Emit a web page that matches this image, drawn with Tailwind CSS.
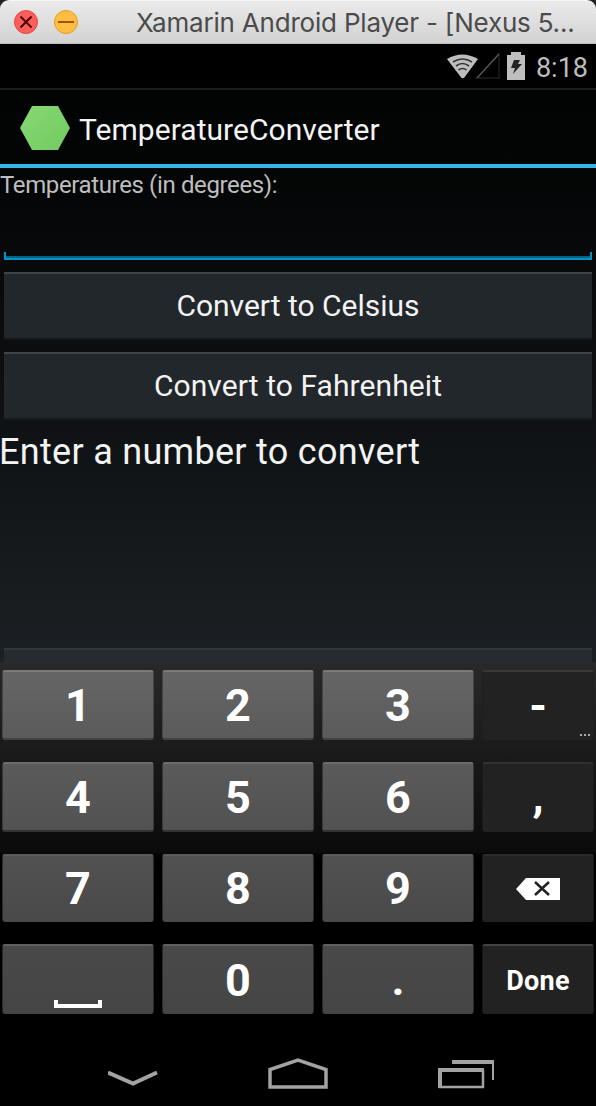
<!DOCTYPE html>
<html lang="en">
<head>
<meta charset="utf-8">
<title>Xamarin Android Player</title>
<script src="https://cdn.jsdelivr.net/npm/@tailwindcss/browser@4"></script>
</head>
<body class="bg-[#222]">
<div class="flex h-[1106px] w-[596px] flex-col overflow-hidden font-['Roboto',sans-serif] whitespace-nowrap">
  <!-- Window title bar -->
  <header class="flex h-[44px] shrink-0 items-center rounded-t-[9px] border-t border-b border-t-[#f6f6f6] border-b-[#bdbdbd] bg-linear-to-b from-[#ebebeb] to-[#d2d2d2] pl-[14px]">
    <svg class="size-6 shrink-0" viewBox="0 0 24 24"><circle cx="12" cy="12" r="11.5" fill="#ff5f5c" stroke="#e2453f"/><path d="M6.5 6.500 17.500 17.500M17.500 6.500 6.500 17.500" stroke="#4d0000" stroke-width="2"/></svg>
    <svg class="ml-4 size-6 shrink-0" viewBox="0 0 24 24"><circle cx="12" cy="12" r="11.500" fill="#ffbe41" stroke="#dfa023"/><path d="M4 12H20" stroke="#995700" stroke-width="2"/></svg>
    <span class="ml-[58px] pt-[2px] font-['Inter'] text-[26px] leading-[42px] tracking-[-0.2px] text-[#4b4b4b]">Xamarin Android Player - [Nexus 5...</span>
  </header>
  <!-- Status bar -->
  <div class="flex h-[46px] shrink-0 items-start justify-end border-b-2 border-[#1c1c1c] bg-black pr-[8px]">
    <svg class="mt-[8px] h-[28px] w-[80px] shrink-0" viewBox="0 0 80 28">
      <path d="M1 7Q16-2 32 7L18 26H15.500Z" fill="#bebebe"/>
      <path d="M7 10Q16.500 4 26 10M10 14Q16.500 9 23 14M12.500 18Q16.500 15 20.500 18" fill="none" stroke="#333" stroke-width="1.600"/>
      <path d="M31 26 53 2V26Z" fill="none" stroke="#1d1d1d" stroke-width="1.500"/><path d="M31 26 53 2" stroke="#555" stroke-width="1.300"/>
      <path d="M61 3H65V0H75V3H79V28H61Z" fill="#bebebe"/><path d="M68 8H74L72 12H76L67 22 69 16H65Z" fill="#222"/>
    </svg>
    <span class="ml-[10px] text-[27px] leading-[49px] text-[#bebebe]">8:18</span>
  </div>
  <!-- App -->
  <main class="flex h-[572px] shrink-0 flex-col overflow-hidden bg-linear-to-b from-[#020303] via-[#0d0f11] to-[#1b2024]">
    <div class="flex h-[78px] shrink-0 items-center border-b-4 border-[#33b5e5] pt-[2px] pl-[20px]">
      <svg class="h-[44px] w-[50px]" viewBox="0 0 50 44"><defs><linearGradient id="g" x2="1" y2="1"><stop stop-color="#88d874"/><stop offset="1" stop-color="#72cb60"/></linearGradient></defs><path d="M12 0H38L50 22 38 44H12L0 22Z" fill="url(#g)"/></svg>
      <span class="ml-[9px] pt-[3px] text-[30px] leading-[40px] tracking-[0.05px] text-[#f3f3f3]">TemperatureConverter</span>
    </div>
    <div class="h-[34px] shrink-0 text-[24px] leading-[34px] tracking-[-0.37px] text-[#bebebe]">Temperatures (in degrees):</div>
    <div class="mx-1 flex h-[58px] shrink-0 flex-col justify-end">
      <div class="h-[8px] border-x-2 border-b-2 border-[#0093c4]"><div class="mt-[4px] h-[2px] bg-[#006384]"></div></div>
    </div>
    <button class="mx-1 mt-[12px] h-[68px] shrink-0 border-t-2 border-b-2 border-t-[#3f4448] border-b-[#15181a] bg-[#22272b] text-[30px] leading-[64px] text-[#f3f3f3]">Convert to Celsius</button>
    <button class="mx-1 mt-[12px] h-[68px] shrink-0 border-t-2 border-b-2 border-t-[#3f4448] border-b-[#151a1a] bg-[#22272b] text-[30px] leading-[64px] tracking-[0.08px] text-[#f3f3f3]">Convert to Fahrenheit</button>
    <div class="-ml-px mt-[8px] h-[48px] shrink-0 text-[36px] leading-[48px] tracking-[0.3px] text-[#f3f3f3]">Enter a number to convert</div>
    <div class="mx-1 mt-auto h-[14px] shrink-0 border-t-2 border-[#31373b] bg-[#252b31]"></div>
  </main>
  <!-- Keyboard -->
  <section class="grid h-[364px] shrink-0 grid-cols-[152px_152px_152px_112px] grid-rows-[70px_70px_68px_70px] gap-x-[8px] gap-y-[22px] bg-linear-to-b from-[#292929] from-0% via-[#0b0b0b] via-52% to-black to-56% pt-[8px] pl-[2px] text-center text-[45px] leading-[68px] font-bold text-white">
    <div class="rounded-[3px] border-x border-t-2 border-b-2 border-x-[#444] border-t-[#7a7a7a] border-b-[#424242] bg-linear-to-b from-[#656565] to-[#5b5b5b]">1</div>
    <div class="rounded-[3px] border-x border-t-2 border-b-2 border-x-[#444] border-t-[#7a7a7a] border-b-[#424242] bg-linear-to-b from-[#656565] to-[#5b5b5b]">2</div>
    <div class="rounded-[3px] border-x border-t-2 border-b-2 border-x-[#444] border-t-[#7a7a7a] border-b-[#424242] bg-linear-to-b from-[#656565] to-[#5b5b5b]">3</div>
    <div class="relative rounded-[3px] border-x border-t-2 border-x-[#1e1e1e] border-t-[#383838] bg-[#222]">-<svg class="absolute right-[3px] bottom-[4px] h-[2px] w-[10px]" viewBox="0 0 10 2"><path d="M0 0h2v2H0zM4 0h2v2H4zM8 0h2v2H8z" fill="#aaa"/></svg></div>
    <div class="rounded-[3px] border-x border-t-2 border-b-2 border-x-[#383838] border-t-[#6c6c6c] border-b-[#333] bg-linear-to-b from-[#5a5a5a] to-[#525252]">4</div>
    <div class="rounded-[3px] border-x border-t-2 border-b-2 border-x-[#383838] border-t-[#6c6c6c] border-b-[#333] bg-linear-to-b from-[#5a5a5a] to-[#525252]">5</div>
    <div class="rounded-[3px] border-x border-t-2 border-b-2 border-x-[#383838] border-t-[#6c6c6c] border-b-[#333] bg-linear-to-b from-[#5a5a5a] to-[#525252]">6</div>
    <div class="rounded-[3px] border-x border-t-2 border-x-[#1b1b1b] border-t-[#303030] bg-[#222] leading-[64px]">,</div>
    <div class="rounded-[3px] border-x border-t-2 border-x-[#2b2b2b] border-t-[#5a5a5a] bg-linear-to-b from-[#515151] to-[#494949] leading-[66px]">7</div>
    <div class="rounded-[3px] border-x border-t-2 border-x-[#2b2b2b] border-t-[#5a5a5a] bg-linear-to-b from-[#515151] to-[#494949] leading-[66px]">8</div>
    <div class="rounded-[3px] border-x border-t-2 border-x-[#2b2b2b] border-t-[#5a5a5a] bg-linear-to-b from-[#515151] to-[#494949] leading-[66px]">9</div>
    <div class="flex items-center justify-center rounded-[3px] border-x border-t-2 border-x-[#191919] border-t-[#2b2b2b] bg-[#222]">
      <svg class="h-[22px] w-[44px]" viewBox="0 0 44 22"><path d="M0 11 10 0H44V22H10Z" fill="#fff"/><path d="M19 4 33 17M33 4 19 17" stroke="#222" stroke-width="2.500"/></svg>
    </div>
    <div class="flex items-end justify-center rounded-[3px] border-x border-t-2 border-x-[#282828] border-t-[#606060] bg-linear-to-b from-[#494949] to-[#454545] pb-[6px]"><div class="h-[8px] w-[48px] border-x-4 border-b-4 border-white"></div></div>
    <div class="rounded-[3px] border-x border-t-2 border-x-[#282828] border-t-[#606060] bg-linear-to-b from-[#494949] to-[#454545] leading-[70px]">0</div>
    <div class="rounded-[3px] border-x border-t-2 border-x-[#282828] border-t-[#606060] bg-linear-to-b from-[#494949] to-[#454545] leading-[67px]">.</div>
    <div class="rounded-[3px] border-x border-t-2 border-x-[#181818] border-t-[#424242] bg-[#222] text-[27px] leading-[70px] tracking-[0.25px]">Done</div>
  </section>
  <!-- Navigation bar -->
  <nav class="flex h-[80px] shrink-0 items-start bg-black pt-[26px] pl-[108px]">
    <svg class="h-[40px] w-[390px]" viewBox="0 0 390 40" fill="none" stroke="#a3a3a3">
      <path d="M0 20.500 25 31.500 49 20.500" stroke-width="4"/>
      <path d="M162 35V17.500L190 8 218 17.500V35Z" stroke-width="3.500"/>
      <path d="M332 18V35H375V18" stroke-width="2.500"/><path d="M330 18H376M344 10H386" stroke-width="4"/><path d="M332 16V36" stroke-width="4"/><path d="M385 8V28" stroke-width="2"/>
    </svg>
  </nav>
</div>
</body>
</html>
